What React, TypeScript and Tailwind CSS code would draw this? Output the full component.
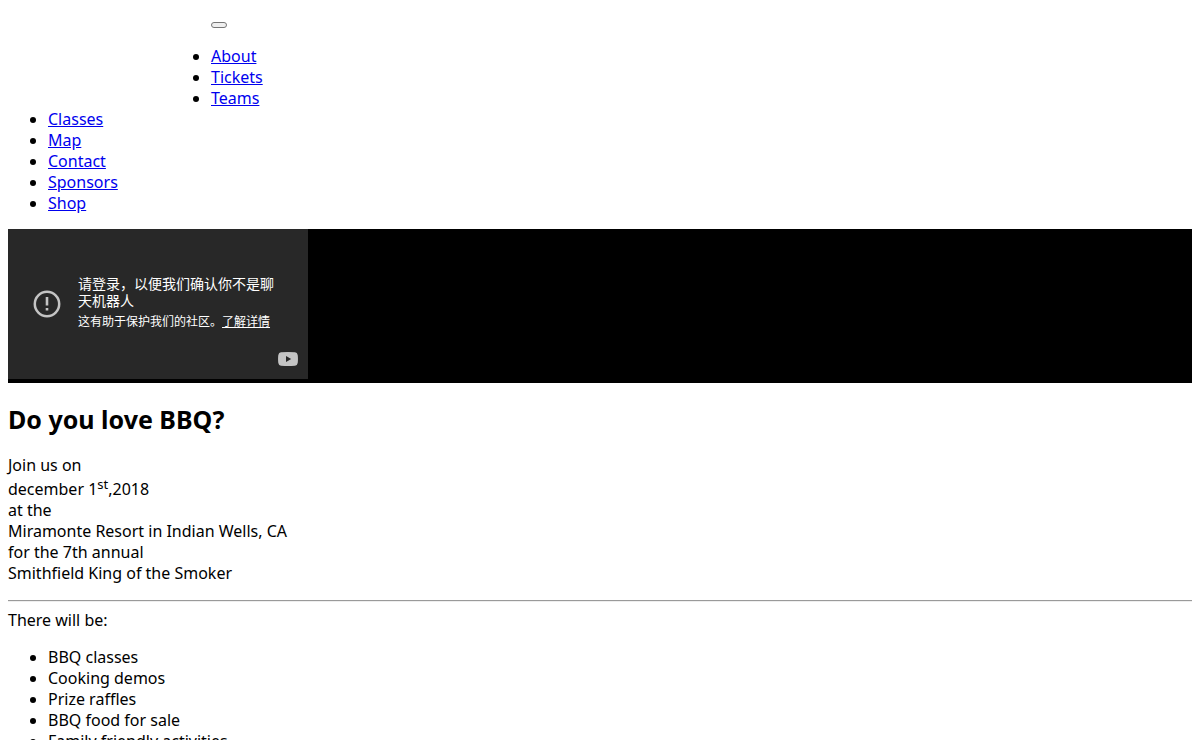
const navLinks = ['About', 'Tickets', 'Teams', 'Classes', 'Map', 'Contact', 'Sponsors', 'Shop'];

const activities = [
  'BBQ classes',
  'Cooking demos',
  'Prize raffles',
  'BBQ food for sale',
  'Family friendly activities',
];

function SiteNav() {
  return (
    <nav>
      <div className="float-left ml-10 h-[100px] w-[163px]" />
      <div className="flex h-[22px] items-end pb-0.5">
        <button
          type="button"
          aria-label="Toggle navigation"
          className="h-1.5 w-4 rounded-[3px] border border-[#767676] bg-[#efefef]"
        />
      </div>
      <ul className="mt-4 list-disc pl-10">
        {navLinks.map((label) => (
          <li key={label}>
            <a href={`#${label.toLowerCase()}`} className="text-[#0000ee] underline">
              {label}
            </a>
          </li>
        ))}
      </ul>
    </nav>
  );
}

function VideoNotice() {
  return (
    <section className="mt-[15px] bg-black pb-1">
      <div className="relative flex h-[150px] w-[300px] items-center bg-[#282828] pl-[25px] pr-6 font-['Liberation_Sans','Noto_Sans_CJK_SC',sans-serif] text-white">
        <svg viewBox="0 0 28 28" className="mr-[17px] size-7 shrink-0" aria-hidden="true">
          <circle cx="14" cy="14" r="12.2" fill="none" stroke="#c4c4c4" strokeWidth="2.5" />
          <path d="M12.7 7h2.6v8.5h-2.6zM12.7 18h2.6v2.6h-2.6z" fill="#c4c4c4" />
        </svg>
        <div className="pb-0.5">
          <p className="text-[14px] leading-[17px]">请登录，以便我们确认你不是聊天机器人</p>
          <p className="mt-1 whitespace-nowrap text-[12px] leading-4">
            这有助于保护我们的社区。
            <a href="#details" className="underline">
              了解详情
            </a>
          </p>
        </div>
        <svg
          viewBox="0 0 20 14"
          className="absolute bottom-[13px] right-2.5 h-3.5 w-5"
          aria-hidden="true"
        >
          <path
            d="M3 .3Q10-.3 17 .3Q19.3.5 19.7 3Q20.2 7 19.7 11Q19.3 13.5 17 13.7Q10 14.3 3 13.7Q.7 13.5.3 11Q-.2 7 .3 3Q.7.5 3 .3Z"
            fill="#c4c4c4"
          />
          <path d="M8 4v6l5.2-3z" fill="#282828" />
        </svg>
      </div>
    </section>
  );
}

export default function App() {
  return (
    <div className="p-2 font-['Noto_Sans','Noto_Sans_CJK_SC',sans-serif] text-[16px] leading-[21px] text-black">
      <SiteNav />
      <VideoNotice />
      <main>
        <h2 className="mt-5 text-[25px] font-bold leading-8">Do you love BBQ?</h2>
        <p className="mt-5">
          Join us on
          <br />
          <span className="inline-block pt-[3px]">
            december 1<sup className="text-[13px] leading-none">st</sup>,2018
          </span>
          <br />
          at the
          <br />
          Miramonte Resort in Indian Wells, CA
          <br />
          for the 7th annual
          <br />
          Smithfield King of the Smoker
        </p>
        <hr className="mb-2 mt-4 h-0.5 border-b border-t border-b-[#eeeeee] border-t-[#9a9a9a]" />
        <p>There will be:</p>
        <ul className="mt-4 list-disc pl-10">
          {activities.map((activity) => (
            <li key={activity}>{activity}</li>
          ))}
        </ul>
      </main>
    </div>
  );
}
